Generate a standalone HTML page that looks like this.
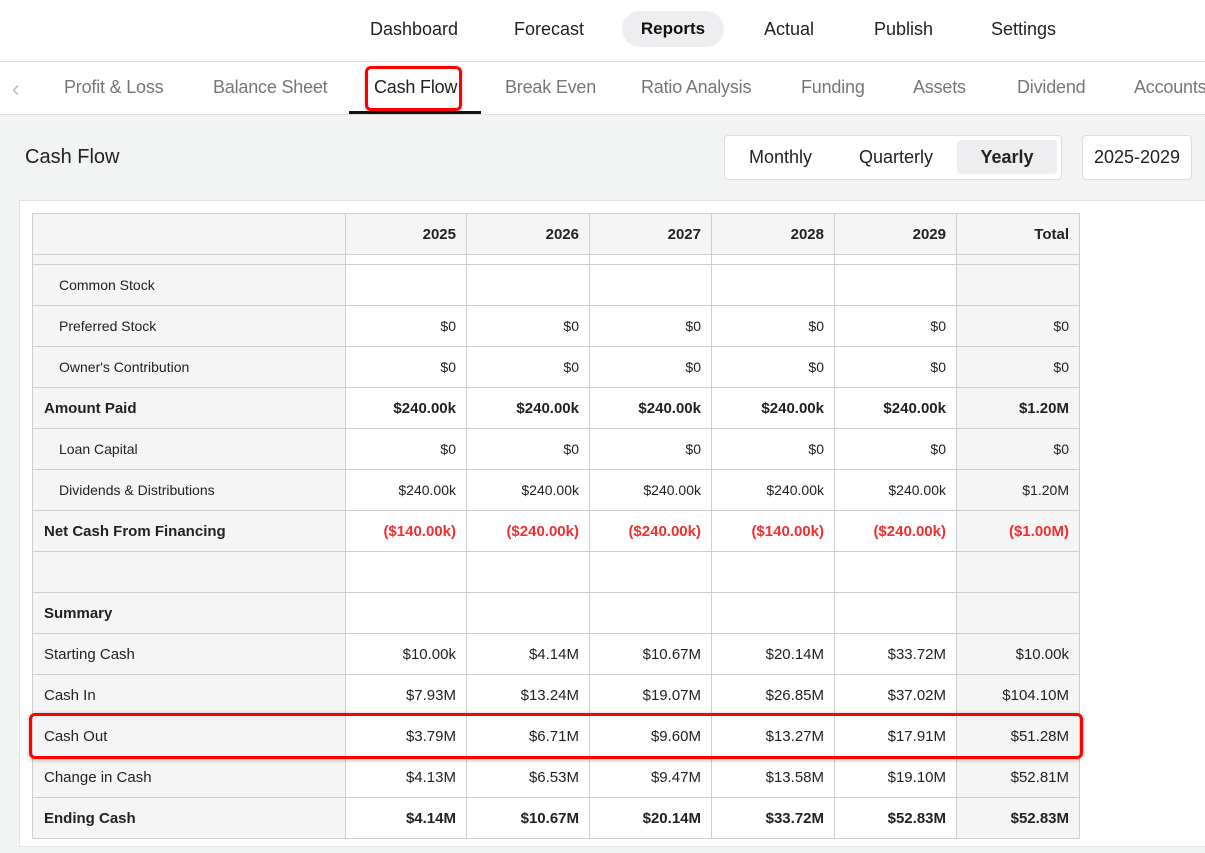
<!DOCTYPE html>
<html><head><meta charset="utf-8"><style>
*{box-sizing:border-box;margin:0;padding:0}
body{width:1205px;height:853px;overflow:hidden;background:#f2f3f3;font-family:"Liberation Sans",Arial,sans-serif;color:#222;position:relative}
.top{position:absolute;left:0;top:0;width:1205px;height:62px;background:#fff;border-bottom:1px solid #e0e0e0}
.top span{position:absolute;top:11px;height:36px;line-height:36px;font-size:18px;color:#222}
.sub{position:absolute;left:0;top:62px;width:1205px;height:53px;background:#fff;border-bottom:1px solid #ddd}
.sub span{position:absolute;top:15px;font-size:18px;color:#777;white-space:nowrap;letter-spacing:-0.2px}
.card{position:absolute;left:19px;top:200px;width:1200px;height:647px;background:#fff;border:1px solid #e2e2e2}
table{position:absolute;left:32px;top:213px;border-collapse:collapse;table-layout:fixed;font-size:15px}
td{border:1px solid #cfcfcf;height:41px;text-align:right;padding-right:10px;background:#fff;white-space:nowrap}
td.l{text-align:left;padding-left:11px;background:#f5f5f5}
td.i{padding-left:26px;font-size:14px}
td.t{background:#f5f5f5}
tr.h td{background:#f5f5f5;font-weight:bold;height:41px}
tr.p td{height:10px}
tr.b td{font-weight:bold}
.r{color:#f03030}
</style></head><body>
<div class="top">
<span style="left:370px">Dashboard</span>
<span style="left:514px">Forecast</span>
<span style="left:622px;width:102px;background:#eeeef0;border-radius:18px;text-align:center;color:#111;font-weight:bold;font-size:17px">Reports</span>
<span style="left:764px">Actual</span>
<span style="left:874px">Publish</span>
<span style="left:991px">Settings</span>
</div>
<div class="sub">
<span style="left:12px;color:#bbb;font-size:22px;top:14px">‹</span>
<span style="left:64px">Profit &amp; Loss</span>
<span style="left:213px">Balance Sheet</span>
<span style="left:374px;color:#222">Cash Flow</span>
<span style="left:505px">Break Even</span>
<span style="left:641px">Ratio Analysis</span>
<span style="left:801px">Funding</span>
<span style="left:913px">Assets</span>
<span style="left:1017px">Dividend</span>
<span style="left:1134px">Accounts</span>
<div style="position:absolute;left:349px;top:49px;width:132px;height:3px;background:#111"></div>
<div style="position:absolute;left:365px;top:4px;width:97px;height:45px;border:3px solid #f00;border-radius:6px;box-shadow:0 1px 3px rgba(0,0,0,.3)"></div>
</div>
<div style="position:absolute;left:25px;top:146px;font-size:20px;color:#222">Cash Flow</div>
<div style="position:absolute;left:724px;top:135px;width:338px;height:45px;background:#fff;border:1px solid #ddd;border-radius:4px">
<span style="position:absolute;left:24px;top:11px;font-size:18px">Monthly</span>
<span style="position:absolute;left:134px;top:11px;font-size:18px">Quarterly</span>
<div style="position:absolute;left:232px;top:4px;width:100px;height:34px;background:#eeeef0;border-radius:4px;text-align:center;line-height:34px;font-size:18px;font-weight:bold">Yearly</div>
</div>
<div style="position:absolute;left:1082px;top:135px;width:110px;height:45px;background:#fff;border:1px solid #ddd;border-radius:4px;font-size:18px;line-height:43px;text-align:center">2025-2029</div>
<div class="card"></div>
<table>
<colgroup><col style="width:313px"><col style="width:121px"><col style="width:123px"><col style="width:122px"><col style="width:123px"><col style="width:122px"><col style="width:123px"></colgroup>
<tr class="h"><td class="l"></td><td>2025</td><td>2026</td><td>2027</td><td>2028</td><td>2029</td><td>Total</td></tr>
<tr class="p"><td class="l"></td><td></td><td></td><td></td><td></td><td></td><td class="t"></td></tr>
<tr><td class="l i">Common Stock</td><td></td><td></td><td></td><td></td><td></td><td class="t"></td></tr>
<tr style="font-size:14px"><td class="l i">Preferred Stock</td><td>$0</td><td>$0</td><td>$0</td><td>$0</td><td>$0</td><td class="t">$0</td></tr>
<tr style="font-size:14px"><td class="l i">Owner's Contribution</td><td>$0</td><td>$0</td><td>$0</td><td>$0</td><td>$0</td><td class="t">$0</td></tr>
<tr class="b"><td class="l">Amount Paid</td><td>$240.00k</td><td>$240.00k</td><td>$240.00k</td><td>$240.00k</td><td>$240.00k</td><td class="t">$1.20M</td></tr>
<tr style="font-size:14px"><td class="l i">Loan Capital</td><td>$0</td><td>$0</td><td>$0</td><td>$0</td><td>$0</td><td class="t">$0</td></tr>
<tr style="font-size:14px"><td class="l i">Dividends &amp; Distributions</td><td>$240.00k</td><td>$240.00k</td><td>$240.00k</td><td>$240.00k</td><td>$240.00k</td><td class="t">$1.20M</td></tr>
<tr class="b"><td class="l">Net Cash From Financing</td><td class="r">($140.00k)</td><td class="r">($240.00k)</td><td class="r">($240.00k)</td><td class="r">($140.00k)</td><td class="r">($240.00k)</td><td class="t r">($1.00M)</td></tr>
<tr><td class="l"></td><td></td><td></td><td></td><td></td><td></td><td class="t"></td></tr>
<tr class="b"><td class="l">Summary</td><td></td><td></td><td></td><td></td><td></td><td class="t"></td></tr>
<tr><td class="l">Starting Cash</td><td>$10.00k</td><td>$4.14M</td><td>$10.67M</td><td>$20.14M</td><td>$33.72M</td><td class="t">$10.00k</td></tr>
<tr><td class="l">Cash In</td><td>$7.93M</td><td>$13.24M</td><td>$19.07M</td><td>$26.85M</td><td>$37.02M</td><td class="t">$104.10M</td></tr>
<tr><td class="l">Cash Out</td><td>$3.79M</td><td>$6.71M</td><td>$9.60M</td><td>$13.27M</td><td>$17.91M</td><td class="t">$51.28M</td></tr>
<tr><td class="l">Change in Cash</td><td>$4.13M</td><td>$6.53M</td><td>$9.47M</td><td>$13.58M</td><td>$19.10M</td><td class="t">$52.81M</td></tr>
<tr class="b"><td class="l">Ending Cash</td><td>$4.14M</td><td>$10.67M</td><td>$20.14M</td><td>$33.72M</td><td>$52.83M</td><td class="t">$52.83M</td></tr>
</table>
<div style="position:absolute;left:29px;top:713px;width:1054px;height:46px;border:3px solid #f00;border-radius:6px;box-shadow:0 1px 4px rgba(0,0,0,.3)"></div>
</body></html>
